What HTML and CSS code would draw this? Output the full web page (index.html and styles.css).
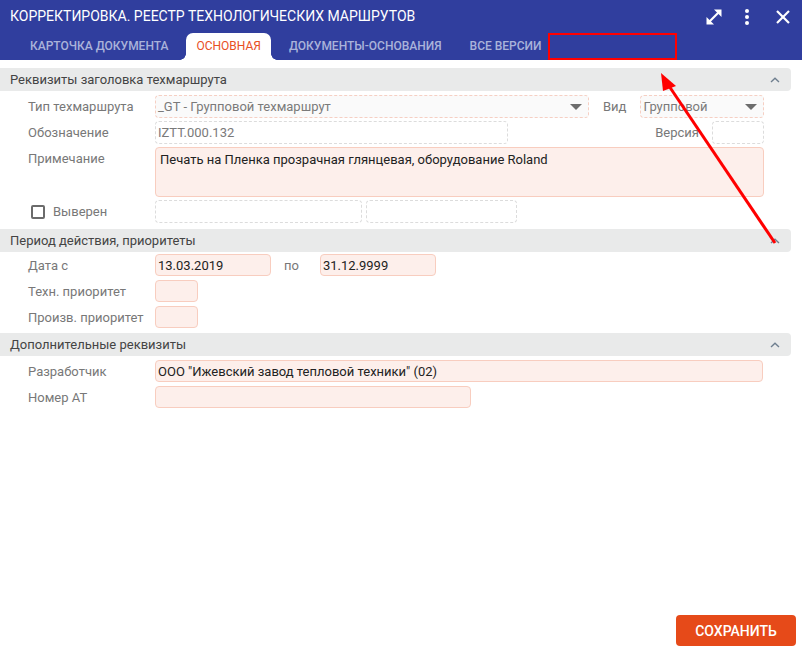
FILE: index.html
```html
<!DOCTYPE html>
<html lang="ru">
<head>
<meta charset="utf-8">
<link rel="stylesheet" href="styles.css">
</head>
<body>
<div class="window">
  <header class="topbar">
    <div class="title-row">
      <div class="title">КОРРЕКТИРОВКА. РЕЕСТР ТЕХНОЛОГИЧЕСКИХ МАРШРУТОВ</div>
      <div class="actions">
        <svg class="icon expand" width="20" height="20" viewBox="0 0 20 20">
          <line x1="5" y1="15" x2="15" y2="5" stroke="#fff" stroke-width="2.2"/>
          <polygon points="10,2.5 17.5,2.5 17.5,10" fill="#fff"/>
          <polygon points="2.5,10 2.5,17.5 10,17.5" fill="#fff"/>
        </svg>
        <svg class="icon dots" width="6" height="18" viewBox="0 0 6 18">
          <circle cx="3" cy="3" r="2" fill="#fff"/>
          <circle cx="3" cy="9" r="2" fill="#fff"/>
          <circle cx="3" cy="15" r="2" fill="#fff"/>
        </svg>
        <svg class="icon close" width="16" height="16" viewBox="0 0 16 16">
          <line x1="2" y1="2" x2="14" y2="14" stroke="#fff" stroke-width="2.2"/>
          <line x1="14" y1="2" x2="2" y2="14" stroke="#fff" stroke-width="2.2"/>
        </svg>
      </div>
    </div>
    <nav class="tabs">
      <div class="tab">КАРТОЧКА ДОКУМЕНТА</div>
      <div class="tab active">ОСНОВНАЯ</div>
      <div class="tab">ДОКУМЕНТЫ-ОСНОВАНИЯ</div>
      <div class="tab">ВСЕ ВЕРСИИ</div>
    </nav>
  </header>

  <main class="content">
    <section class="section">
      <div class="sec-head"><span>Реквизиты заголовка техмаршрута</span><svg class="chev" width="10" height="6" viewBox="0 0 10 6"><polyline points="1,5 5,1.3 9,5" fill="none" stroke="#6f7f8f" stroke-width="1.4"/></svg></div>
      <div class="sec-body">
        <div class="row">
          <div class="label">Тип техмаршрута</div>
          <div class="field select w-type"><span class="val muted">_GT - Групповой техмаршрут</span><span class="caret"></span></div>
          <div class="mid-label vid">Вид</div>
          <div class="field select w-vid"><span class="val muted">Групповой</span><span class="caret"></span></div>
        </div>
        <div class="row">
          <div class="label">Обозначение</div>
          <div class="field ro w-code"><span class="val muted">IZTT.000.132</span></div>
          <div class="spacer"></div>
          <div class="mid-label ver">Версия</div>
          <div class="field ro w-ver"></div>
        </div>
        <div class="row tall">
          <div class="label">Примечание</div>
          <div class="field edit area w-note"><span class="val">Печать на Пленка прозрачная глянцевая, оборудование Roland</span></div>
        </div>
        <div class="row">
          <div class="label check-label"><span class="checkbox"></span>Выверен</div>
          <div class="field ro w-c1"></div>
          <div class="field ro w-c2"></div>
        </div>
      </div>
    </section>

    <section class="section">
      <div class="sec-head"><span>Период действия, приоритеты</span><svg class="chev" width="10" height="6" viewBox="0 0 10 6"><polyline points="1,5 5,1.3 9,5" fill="none" stroke="#6f7f8f" stroke-width="1.4"/></svg></div>
      <div class="sec-body s2">
        <div class="row">
          <div class="label">Дата с</div>
          <div class="field edit w-date"><span class="val">13.03.2019</span></div>
          <div class="mid-label po">по</div>
          <div class="field edit w-date"><span class="val">31.12.9999</span></div>
        </div>
        <div class="row">
          <div class="label">Техн. приоритет</div>
          <div class="field edit w-prio"></div>
        </div>
        <div class="row">
          <div class="label">Произв. приоритет</div>
          <div class="field edit w-prio"></div>
        </div>
      </div>
    </section>

    <section class="section">
      <div class="sec-head"><span>Дополнительные реквизиты</span><svg class="chev" width="10" height="6" viewBox="0 0 10 6"><polyline points="1,5 5,1.3 9,5" fill="none" stroke="#6f7f8f" stroke-width="1.4"/></svg></div>
      <div class="sec-body s3">
        <div class="row">
          <div class="label">Разработчик</div>
          <div class="field edit w-dev"><span class="val">ООО "Ижевский завод тепловой техники" (02)</span></div>
        </div>
        <div class="row">
          <div class="label">Номер АТ</div>
          <div class="field edit w-at"></div>
        </div>
      </div>
    </section>
  </main>

  <footer class="footer">
    <button class="save">СОХРАНИТЬ</button>
  </footer>

  <div class="mark-box"></div>
  <svg class="mark-arrow" width="802" height="651" viewBox="0 0 802 651">
    <line x1="775" y1="243" x2="667" y2="83" stroke="#f00" stroke-width="3"/>
    <polygon points="661,73 676,86 663,91" fill="#f00"/>
  </svg>
</div>
</body>
</html>
```

FILE: styles.css
```css
* { box-sizing: border-box; }

html, body {
  margin: 0;
  padding: 0;
  background: #fff;
}

body {
  font-family: Roboto, "Noto Sans", "Liberation Sans", sans-serif;
}

.window {
  position: relative;
  width: 802px;
  height: 651px;
  display: flex;
  flex-direction: column;
  overflow: hidden;
}

.topbar {
  background: #303e9e;
  height: 60px;
  display: flex;
  flex-direction: column;
}

.title-row {
  height: 32px;
  display: flex;
  align-items: center;
  justify-content: space-between;
  padding: 0 11px 0 10px;
}

.title {
  color: #fff;
  font-size: 14px;
  letter-spacing: 0;
  padding-top: 0;
}

.actions {
  display: flex;
  align-items: center;
}

.icon.expand { margin-right: 20px; margin-top: 1px; }
.icon.dots { margin-right: 25px; margin-top: 1px; }
.icon.close { margin-top: 1px; }

.tabs {
  flex: 1;
  display: flex;
  align-items: flex-end;
  padding-left: 20px;
  gap: 8px;
}

.tab {
  position: relative;
  height: 27px;
  padding: 0 10px;
  display: flex;
  align-items: center;
  font-size: 12px;
  font-weight: 500;
  color: #aab3da;
  padding-bottom: 1px;
}

.tab.active {
  background: #fff;
  color: #e8501f;
  border-radius: 7px 7px 0 0;
  font-weight: 400;
}

.tab.active::before,
.tab.active::after {
  content: "";
  position: absolute;
  bottom: 0;
  width: 6px;
  height: 6px;
}

.tab.active::before {
  left: -6px;
  background: radial-gradient(circle at 0 0, transparent 5.5px, #fff 6px);
}

.tab.active::after {
  right: -6px;
  background: radial-gradient(circle at 100% 0, transparent 5.5px, #fff 6px);
}

.content {
  flex: 1;
  padding-top: 8px;
}

.section {
  width: 791px;
}

.sec-head {
  height: 23px;
  background: #e9eaea;
  border-radius: 0 4px 4px 0;
  display: flex;
  align-items: center;
  justify-content: space-between;
  padding: 0 11px 0 10px;
  font-size: 13px;
  color: #444;
}

.chev { margin-top: 0; }

.sec-body {
  padding: 4px 0 6px 28px;
  display: flex;
  flex-direction: column;
  gap: 3px;
}

.sec-body.s2 { padding-top: 2px; padding-bottom: 5px; gap: 4px; }
.sec-body.s3 { padding-top: 4px; gap: 4px; }

.row {
  display: flex;
  align-items: flex-start;
  height: 23px;
}

.row.tall { height: 50px; }

.s2 .row, .s3 .row { height: 22px; }

.label {
  width: 127px;
  flex: none;
  font-size: 13px;
  line-height: 23px;
  color: #787878;
}

.check-label {
  display: flex;
  align-items: center;
  margin-left: 3px;
  width: 124px;
}

.checkbox {
  width: 14px;
  height: 14px;
  border: 2px solid #6b6b6b;
  border-radius: 2px;
  margin-right: 8px;
}

.field {
  height: 23px;
  border-radius: 4px;
  display: flex;
  align-items: center;
  font-size: 13px;
  color: #222;
  padding-left: 2px;
  flex: none;
}

.s2 .field, .s3 .field { height: 22px; }

.field.select {
  border: 1px dashed #f6cfc3;
  background: #fafafa;
  position: relative;
}

.field.ro {
  border: 1px dashed #dcdcdc;
  background: #fff;
}

.field.edit {
  border: 1px solid #f8cdbf;
  background: #fdefeb;
}

.field.area {
  height: 50px;
  align-items: flex-start;
  padding: 4px 4px;
}

.val { white-space: nowrap; }
.val.muted { color: #7a7a7a; }

.caret {
  position: absolute;
  right: 6px;
  top: 8px;
  width: 0;
  height: 0;
  border-left: 6px solid transparent;
  border-right: 6px solid transparent;
  border-top: 6px solid #6d6d6d;
}

.mid-label {
  font-size: 13px;
  line-height: 23px;
  color: #787878;
  flex: none;
}

.vid { margin: 0 14px; }
.ver { margin-right: 13px; }
.po { margin: 0 21px 0 13px; }

.spacer { flex: 1; }

.w-type { width: 434px; }
.w-vid { width: 124px; }
.w-code { width: 353px; }
.w-ver { width: 52px; margin-right: 27px; }
.w-note { width: 609px; }
.w-c1 { width: 207px; margin-right: 4px; }
.w-c2 { width: 151px; }
.w-date { width: 116px; }
.w-prio { width: 43px; }
.w-dev { width: 608px; }
.w-at { width: 316px; }

.footer {
  display: flex;
  justify-content: flex-end;
  padding: 0 6px 5px 0;
}

.save {
  width: 120px;
  height: 31px;
  border: none;
  border-radius: 4px;
  background: #e64a19;
  color: #fff;
  font-family: Roboto, "Noto Sans", sans-serif;
  font-size: 14px;
  font-weight: 500;
  padding: 0;
}

.mark-box {
  position: absolute;
  left: 548px;
  top: 33px;
  width: 129px;
  height: 27px;
  border: 2px solid #f00;
}

.mark-arrow {
  position: absolute;
  left: 0;
  top: 0;
  pointer-events: none;
}
```
